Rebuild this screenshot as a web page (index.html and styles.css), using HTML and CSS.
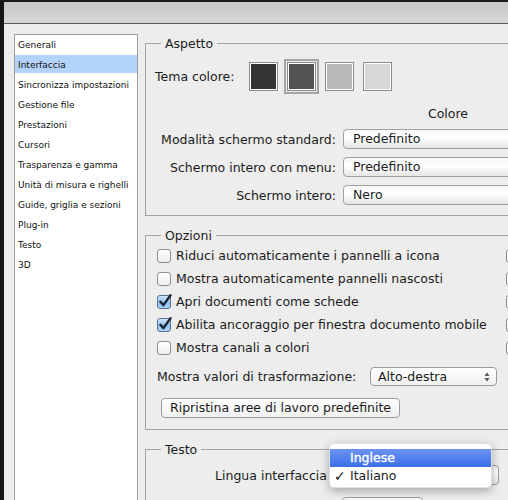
FILE: index.html
```html
<!DOCTYPE html>
<html lang="it">
<head>
<meta charset="utf-8">
<title>Preferenze - Interfaccia</title>
<link rel="stylesheet" href="styles.css">
</head>
<body>
<div class="window">
  <div class="titlebar"></div>
  <div class="content">
    <ul class="sidebar">
      <li>Generali</li>
      <li class="selected">Interfaccia</li>
      <li>Sincronizza impostazioni</li>
      <li>Gestione file</li>
      <li>Prestazioni</li>
      <li>Cursori</li>
      <li>Trasparenza e gamma</li>
      <li>Unità di misura e righelli</li>
      <li>Guide, griglia e sezioni</li>
      <li>Plug-in</li>
      <li>Testo</li>
      <li>3D</li>
    </ul>
    <div class="main">
      <section class="group">
        <div class="legend">Aspetto</div>
        <div class="tema-row">
          <span class="tema-label">Tema colore:</span>
          <div class="swatches">
            <span class="swatch sw1"></span>
            <span class="swatch sw2 current"></span>
            <span class="swatch sw3"></span>
            <span class="swatch sw4"></span>
          </div>
        </div>
        <div class="form-grid aspetto-grid">
          <span></span><span class="col-head">Colore</span>
          <span class="lbl">Modalità schermo standard:</span><div class="popup">Predefinito</div>
          <span class="lbl">Schermo intero con menu:</span><div class="popup">Predefinito</div>
          <span class="lbl">Schermo intero:</span><div class="popup">Nero</div>
        </div>
      </section>

      <section class="group opzioni">
        <div class="legend">Opzioni</div>
        <div class="checks">
          <div class="check-row"><span class="cb"></span>Riduci automaticamente i pannelli a icona</div>
          <div class="check-row"><span class="cb"></span></div>
          <div class="check-row"><span class="cb"></span>Mostra automaticamente pannelli nascosti</div>
          <div class="check-row"><span class="cb"></span></div>
          <div class="check-row"><span class="cb on"><svg class="tick" viewBox="0 0 14 14"><path d="M3.2 7.2 L6 10.4 L12.6 1.2" /></svg></span>Apri documenti come schede</div>
          <div class="check-row"><span class="cb"></span></div>
          <div class="check-row"><span class="cb on"><svg class="tick" viewBox="0 0 14 14"><path d="M3.2 7.2 L6 10.4 L12.6 1.2" /></svg></span>Abilita ancoraggio per finestra documento mobile</div>
          <div class="check-row"><span class="cb"></span></div>
          <div class="check-row"><span class="cb"></span>Mostra canali a colori</div>
          <div class="check-row"><span class="cb"></span></div>
        </div>
        <div class="transform-row">
          <span class="transform-label">Mostra valori di trasformazione:</span>
          <div class="select">Alto-destra<svg class="arrows" viewBox="0 0 6 10"><path d="M3 0.5 L5.5 4 L0.5 4 Z M3 9.5 L5.5 6 L0.5 6 Z"/></svg></div>
        </div>
        <button class="btn" type="button">Ripristina aree di lavoro predefinite</button>
      </section>

      <section class="group testo">
        <div class="legend">Testo</div>
        <div class="form-grid testo-grid">
          <span class="lbl">Lingua interfaccia</span><div class="popup lingua"></div>
        </div>
        <div class="next-row"><div class="popup small"></div></div>
        <div class="menu">
          <div class="menu-item hl"><span class="mark"></span>Inglese</div>
          <div class="menu-item"><span class="mark">✓</span>Italiano</div>
        </div>
      </section>
    </div>
  </div>
</div>
</body>
</html>
```

FILE: styles.css
```css
html, body {
  margin: 0;
  height: 500px;
  overflow: hidden;
}
body {
  font-family: "DejaVu Sans", "Liberation Sans", sans-serif;
  font-size: 12.5px;
  color: #1b1b1b;
  background: #ededed;
}
.window {
  border-left: 4px solid #161616;
  border-top: 2px solid #1c1c1c;
  height: 498px;
}
.titlebar {
  height: 21px;
  background: linear-gradient(#c9c9c9, #d6d6d6);
  border-bottom: 1px solid #5a5a5a;
}
.content {
  display: flex;
  align-items: flex-start;
}
.sidebar {
  flex: none;
  list-style: none;
  margin: 10px 0 0 10px;
  padding: 0;
  width: 122px;
  height: 480px;
  border: 1px solid #9c9c9c;
  background: #fff;
  font-size: 9px;
  color: #111;
}
.sidebar li {
  height: 20px;
  line-height: 20px;
  padding-left: 3px;
  white-space: nowrap;
}
.sidebar li.selected {
  background: linear-gradient(#b4d3fb, #b4d3fb) no-repeat;
  background-size: 100% 18px;
}
.main {
  flex: none;
  margin-left: 7px;
  width: 440px;
}
.group {
  position: relative;
  border: 1px solid #a3a3a3;
  margin-top: 19px;
}
.legend {
  display: table;
  margin: -8px 0 0 15px;
  padding: 0 4px;
  background: #ededed;
  line-height: 15px;
}
.tema-row {
  display: flex;
  align-items: center;
  height: 29px;
  margin-top: 11px;
  padding-left: 9px;
}
.tema-label {
  width: 94px;
}
.swatches {
  display: flex;
  gap: 9px;
}
.swatch {
  width: 29px;
  height: 29px;
  box-sizing: border-box;
  border: 1px solid #8b8b8b;
  box-shadow: inset 0 0 0 1px #fff;
}
.swatch.current {
  outline: 2px solid #a4a4a4;
  outline-offset: 1px;
}
.sw1 { background: #333333; }
.sw2 { background: #535353; }
.sw3 { background: #b8b8b8; }
.sw4 { background: #d7d7d7; }

.form-grid {
  display: grid;
  column-gap: 7px;
  row-gap: 8px;
  align-items: center;
  padding-left: 9px;
}
.aspetto-grid {
  grid-template-columns: 181px 210px;
  margin-top: 15px;
  padding-bottom: 10px;
}
.col-head {
  text-align: center;
  line-height: 15px;
}
.lbl {
  text-align: right;
  white-space: nowrap;
}
.popup {
  height: 20px;
  box-sizing: border-box;
  border: 1px solid #a0a0a0;
  border-radius: 4px 0 0 4px;
  background: linear-gradient(#f7f7f7, #ffffff 45%, #e6e6e6);
  line-height: 18px;
  padding-left: 9px;
}

.checks {
  display: grid;
  grid-template-columns: 349px 100px;
  grid-auto-rows: 23px;
  align-items: center;
  margin-top: 1px;
  padding-left: 11px;
}
.check-row {
  display: flex;
  align-items: center;
  gap: 5px;
  white-space: nowrap;
}
.cb {
  position: relative;
  flex: none;
  width: 14px;
  height: 14px;
  box-sizing: border-box;
  border: 1px solid #8e8e8e;
  border-radius: 3px;
  background: linear-gradient(#ffffff, #ececec);
}
.cb.on {
  border-color: #5c6f8e;
  background: linear-gradient(#cfe5fb, #8dc1f1 55%, #a9d3f7);
}
.tick {
  position: absolute;
  left: -1px;
  top: -2px;
  width: 15px;
  height: 15px;
  fill: none;
  stroke: #1a2433;
  stroke-width: 2.2;
  stroke-linecap: round;
  stroke-linejoin: round;
}
.transform-row {
  display: flex;
  align-items: center;
  height: 19px;
  margin-top: 8px;
  padding-left: 11px;
}
.transform-label {
  width: 213px;
  white-space: nowrap;
}
.select {
  position: relative;
  width: 127px;
  height: 19px;
  box-sizing: border-box;
  border: 1px solid #9b9b9b;
  border-radius: 4px;
  background: linear-gradient(#ffffff, #f0f0f0);
  line-height: 17px;
  padding-left: 7px;
}
.arrows {
  position: absolute;
  right: 6px;
  top: 4px;
  width: 6px;
  height: 10px;
  fill: #555;
}
.btn {
  display: block;
  margin: 12px 0 0 15px;
  height: 20px;
  padding: 0 8px;
  border: 1px solid #9b9b9b;
  border-radius: 4px;
  background: linear-gradient(#ffffff, #f0f0f0);
  font: inherit;
  color: inherit;
  line-height: 18px;
  white-space: nowrap;
}
.opzioni {
  padding-bottom: 11px;
}
.testo-grid {
  grid-template-columns: 172px 156px;
  column-gap: 16px;
  margin-top: 8px;
}
.lingua {
  border-radius: 4px;
}
.next-row {
  margin-top: 12px;
  padding-left: 196px;
}
.popup.small {
  width: 81px;
  border-radius: 4px;
}
.menu {
  position: absolute;
  left: 183px;
  top: -7px;
  width: 163px;
  height: 45px;
  box-sizing: border-box;
  padding: 5px 0 4px;
  background: rgba(255, 255, 255, 0.97);
  border: 1px solid rgba(0, 0, 0, 0.12);
  border-radius: 5px;
  box-shadow: 0 3px 10px rgba(0, 0, 0, 0.3);
}
.menu-item {
  display: flex;
  height: 18px;
  line-height: 18px;
  padding-left: 4px;
}
.menu-item.hl {
  background: linear-gradient(#6c93f4, #3b6ee8);
  color: #fff;
  -webkit-text-stroke: 0.35px #fff;
}
.mark {
  width: 16px;
  flex: none;
  font-size: 14px;
}
```
